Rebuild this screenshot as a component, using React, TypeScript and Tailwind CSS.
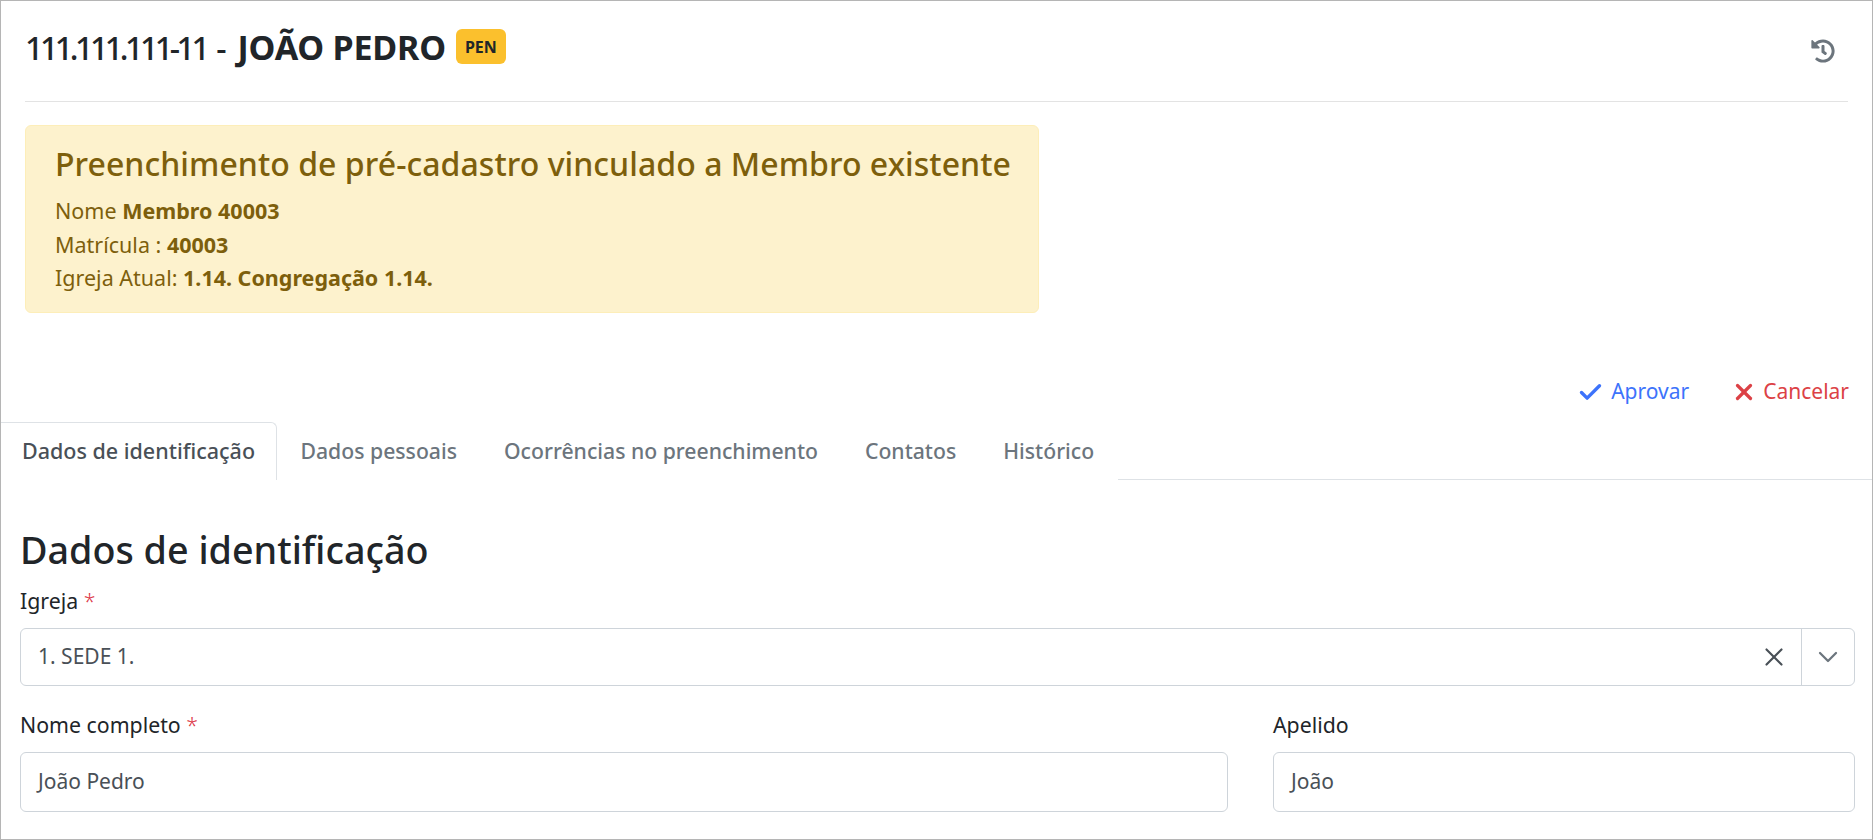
import { Check, ChevronDown, X } from 'lucide-react';
import { FaHistory } from 'react-icons/fa';

const tabs = ['Dados pessoais', 'Ocorrências no preenchimento', 'Contatos', 'Histórico'];

function Field({ label, value, required, className }: { label: string; value: string; required?: boolean; className: string }) {
  return (
    <div className={className}>
      <label className="block h-[29px] text-[21.3px] leading-[29px] text-[#212529]">
        {label}
        {required && <span className="font-light text-[#dc3545]"> *</span>}
      </label>
      <div className="mt-[13px] flex h-[60px] items-center rounded-[6px] border border-[#ced4da] px-[17px] text-[21px] text-[#495057]">
        {value}
      </div>
    </div>
  );
}

export default function App() {
  return (
    <div className="h-[840px] overflow-hidden border border-[#b5b5b5] bg-white font-['Noto_Sans',sans-serif]">
      <div className="px-6">
        <div className="flex h-[101px] items-start justify-between border-b border-[#e3e3e3]">
          <div className="mt-[22px] flex items-start">
            <h1 className="text-[32px] leading-[48px] font-medium whitespace-pre text-[#212529]">
              <span className="tracking-[-3.4px]">111.111.111-11</span>
              <span className="tracking-[1.4px]">{' - '}</span>
              <b className="text-[34px] font-bold tracking-[-0.2px]">JOÃO PEDRO</b>
            </h1>
            <span className="mt-[6px] ml-[10px] flex h-[35px] w-[50px] items-center justify-center rounded-[6px] bg-[#fbc02d] text-[16px] font-bold text-[#212529]">
              PEN
            </span>
          </div>
          <FaHistory className="mt-[38px] mr-[13px] text-[24px] text-[#6c757d]" />
        </div>

        <div className="mt-[23px] h-[188px] w-[1014px] rounded-[6px] border border-[#fdeeb9] bg-[#fdf2cd] pt-[18px] pr-[20px] pl-[29px] text-[#7d5f0c]">
          <h4 className="text-[32px] leading-[40px] font-medium tracking-[0.05px]">Preenchimento de pré-cadastro vinculado a Membro existente</h4>
          <div className="mt-[10px] text-[21.5px] leading-[33.5px]">
            <p>Nome <b>Membro 40003</b></p>
            <p>Matrícula : <b>40003</b></p>
            <p>Igreja Atual: <b>1.14. Congregação 1.14.</b></p>
          </div>
        </div>
      </div>

      <div className="mt-[62px] flex h-[34px] items-center justify-end gap-[42px] pr-[23px] text-[21px]">
        <span className="flex items-center gap-[7px] text-[#3d73fb]"><Check size={27} strokeWidth={3} />Aprovar</span>
        <span className="flex items-center gap-[6px] text-[#dc4146]"><X size={26} strokeWidth={3} />Cancelar</span>
      </div>

      <div className="mt-[13px] flex h-[58px]">
        <div className="flex w-[276px] items-center justify-center rounded-tr-[6px] border-t border-r border-[#dee2e6] text-[21.5px] font-medium text-[#495057]">
          Dados de identificação
        </div>
        {tabs.map((tab) => (
          <div key={tab} className="flex items-center px-[23.5px] text-[21.2px] font-medium text-[#6c757d]">
            {tab}
          </div>
        ))}
        <div className="flex-1 border-b border-[#dee2e6]" />
      </div>

      <div className="pr-[17px] pl-[19px]">
        <h2 className="mt-[45px] text-[37.7px] leading-[50px] font-medium text-[#212529]">Dados de identificação</h2>
        <label className="mt-[11px] block h-[29px] text-[21.3px] leading-[29px] text-[#212529]">
          Igreja<span className="font-light text-[#dc3545]"> *</span>
        </label>
        <div className="mt-[13px] flex h-[58px] items-center rounded-[6px] border border-[#ced4da]">
          <span className="flex-1 px-[17px] text-[21px] text-[#495057]">1. SEDE 1.</span>
          <X size={30} strokeWidth={1.7} className="mr-[12px] text-[#495057]" />
          <div className="flex h-full w-[53px] items-center justify-center border-l border-[#ced4da]">
            <ChevronDown size={32} strokeWidth={1.7} className="text-[#6c757d]" />
          </div>
        </div>
        <div className="mt-[24px] flex gap-[45px]">
          <Field label="Nome completo" value="João Pedro" required className="w-[1208px]" />
          <Field label="Apelido" value="João" className="w-[582px]" />
        </div>
      </div>
    </div>
  );
}
